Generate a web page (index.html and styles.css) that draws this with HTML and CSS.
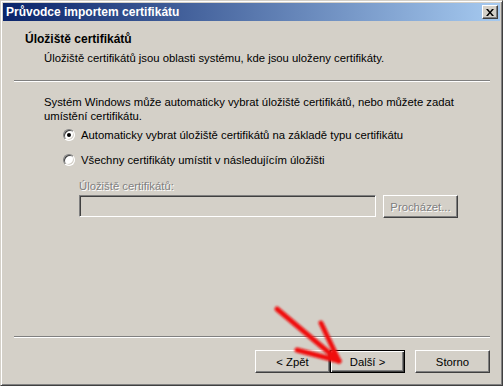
FILE: index.html
```html
<!DOCTYPE html>
<html lang="cs">
  <head>
    <meta charset="UTF-8" />
    <meta name="viewport" content="width=device-width, initial-scale=1.0" />
    <title>Průvodce importem certifikátu</title>
    <link rel="stylesheet" href="styles.css">
  </head>
  <body>
    <div class="window">
      <div class="titlebar">
        <span class="title">Průvodce importem certifikátu</span>
        <button class="close" aria-label="Zavřít">
          <svg width="8" height="7" viewBox="0 0 8 7">
            <path d="M0 0h2l2 2.5L6 0h2L5 3.5 8 7H6L4 4.5 2 7H0l3-3.5z" fill="#000" />
          </svg>
        </button>
      </div>

      <div class="header">
        <h1>Úložiště certifikátů</h1>
        <p>Úložiště certifikátů jsou oblasti systému, kde jsou uloženy certifikáty.</p>
      </div>

      <div class="rule"></div>

      <div class="content">
        <p class="intro">
          Systém Windows může automaticky vybrat úložiště certifikátů, nebo můžete zadat
          umístění certifikátu.
        </p>

        <label class="option first">
          <span class="radio checked"></span>
          Automaticky vybrat úložiště certifikátů na základě typu certifikátu
        </label>
        <label class="option">
          <span class="radio"></span>
          Všechny certifikáty umístit v následujícím úložišti
        </label>

        <div class="store">
          <span class="store-label">Úložiště certifikátů:</span>
          <div class="store-row">
            <div class="field"></div>
            <button class="btn disabled">Procházet...</button>
          </div>
        </div>
      </div>

      <div class="rule"></div>

      <div class="buttons">
        <button class="btn">&lt; Zpět</button>
        <button class="btn default">Další &gt;</button>
        <button class="btn gap">Storno</button>
      </div>

      <svg class="arrow" width="503" height="386" viewBox="0 0 503 386">
        <defs>
          <filter id="soft" x="-10%" y="-10%" width="120%" height="120%">
            <feGaussianBlur stdDeviation="0.8" />
          </filter>
        </defs>
        <g stroke="#f01010" stroke-width="5" stroke-linecap="round" fill="none" filter="url(#soft)">
          <path d="M277 309 L339 361" />
          <path d="M321 323 L339 361" />
          <path d="M297 350 L339 361" />
        </g>
      </svg>
    </div>
  </body>
</html>
```

FILE: styles.css
```css
body {
  margin: 0;
  padding: 0;
  font-family: "Liberation Sans", Arial, sans-serif;
  font-size: 11.3px;
  color: #000;
  background-color: #d4d0c8;
}

.window {
  position: relative;
  width: 503px;
  height: 386px;
  box-sizing: border-box;
  display: flex;
  flex-direction: column;
  padding: 2px;
  background-color: #d4d0c8;
  border: 1px solid;
  border-color: #d4d0c8 #404040 #404040 #d4d0c8;
  box-shadow: inset 1px 1px #fff, inset -1px -1px #808080;
}

.titlebar {
  height: 18px;
  display: flex;
  align-items: center;
  justify-content: space-between;
  padding: 0 2px 0 3px;
  background: linear-gradient(to right, #0a246a, #a6caf0);
}

.title {
  color: #fff;
  font-weight: bold;
  font-size: 12px;
}

.close {
  width: 16px;
  height: 14px;
  padding: 0;
  display: flex;
  align-items: center;
  justify-content: center;
  background-color: #d4d0c8;
  border: 1px solid;
  border-color: #fff #404040 #404040 #fff;
  box-shadow: inset -1px -1px #808080;
}

.header {
  padding: 12px 0 15px 22px;
}

.header h1 {
  margin: 0;
  font-size: 12px;
  font-weight: bold;
  line-height: 13px;
}

.header p {
  margin: 6px 0 0 19px;
  line-height: 13px;
}

.rule {
  margin: 0 10px 0 11px;
  height: 0;
  border-top: 1px solid #808080;
  border-bottom: 1px solid #fff;
}

.content {
  flex: 1;
  padding: 13px 0 0 41px;
  display: flex;
  flex-direction: column;
}

.intro {
  margin: 0;
  line-height: 14px;
  width: 430px;
}

.option {
  display: flex;
  align-items: center;
  gap: 6px;
  margin-left: 19px;
  margin-top: 11px;
  height: 14px;
}

.option.first {
  margin-top: 5px;
}

.radio {
  width: 12px;
  height: 12px;
  box-sizing: border-box;
  border-radius: 50%;
  border: 1px solid;
  border-color: #808080 #fff #fff #808080;
  box-shadow: inset 1px 1px #404040, inset -1px -1px #d4d0c8;
  background-color: #fff;
  display: flex;
  align-items: center;
  justify-content: center;
}

.radio.checked::after {
  content: "";
  width: 4px;
  height: 4px;
  border-radius: 50%;
  background-color: #000;
}

.store {
  margin: 13px 0 0 35px;
  display: flex;
  flex-direction: column;
}

.store-label {
  color: #808080;
  text-shadow: 1px 1px #fff;
  line-height: 13px;
}

.store-row {
  display: flex;
  gap: 7px;
  margin-top: 2px;
}

.field {
  width: 297px;
  height: 22px;
  box-sizing: border-box;
  border: 1px solid;
  border-color: #808080 #fff #fff #808080;
  box-shadow: inset 1px 1px #404040, inset -1px -1px #d4d0c8;
  background-color: #d4d0c8;
}

.btn {
  font-family: "Liberation Sans", Arial, sans-serif;
  font-size: 11.3px;
  color: #000;
  width: 75px;
  height: 23px;
  padding: 0;
  box-sizing: border-box;
  background-color: #d4d0c8;
  border: 1px solid;
  border-color: #fff #404040 #404040 #fff;
  box-shadow: inset -1px -1px #808080;
}

.btn.disabled {
  color: #808080;
  text-shadow: 1px 1px #fff;
}

.btn.default {
  border: 1px solid #000;
  box-shadow: inset 1px 1px #fff, inset -1px -1px #404040, inset -2px -2px #808080;
}

.buttons {
  display: flex;
  justify-content: flex-end;
  padding: 12px 10px 10px 0;
}

.btn.gap {
  margin-left: 10px;
}

.arrow {
  position: absolute;
  left: -1px;
  top: -1px;
  pointer-events: none;
}
```
